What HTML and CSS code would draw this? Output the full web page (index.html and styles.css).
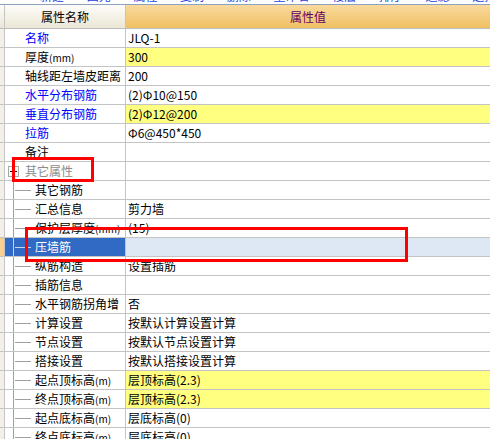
FILE: index.html
```html
<!DOCTYPE html>
<html lang="zh-CN">
<head>
<meta charset="utf-8">
<title>属性编辑</title>
<link rel="stylesheet" href="styles.css">
</head>
<body>
<div class="page">
  <div class="strip"><span class="frag">新建 图元 属性 复制 删除 重命名 楼层 排序 过滤 选择</span></div>
  <div class="table">
    <div class="row head"><div class="mg"></div><div class="nm">属性名称</div><div class="vl">属性值</div></div>
    <div class="row"><div class="mg"></div><div class="nm blue">名称</div><div class="vl">JLQ-1</div></div>
    <div class="row"><div class="mg"></div><div class="nm">厚度<span class="unit">(mm)</span></div><div class="vl yel">300</div></div>
    <div class="row"><div class="mg"></div><div class="nm">轴线距左墙皮距离</div><div class="vl">200</div></div>
    <div class="row"><div class="mg"></div><div class="nm blue">水平分布钢筋</div><div class="vl">(2)Φ10@150</div></div>
    <div class="row"><div class="mg"></div><div class="nm blue">垂直分布钢筋</div><div class="vl yel">(2)Φ12@200</div></div>
    <div class="row"><div class="mg"></div><div class="nm blue">拉筋</div><div class="vl">Φ6@450*450</div></div>
    <div class="row"><div class="mg"></div><div class="nm">备注</div><div class="vl"></div></div>
    <div class="row"><div class="mg"></div><div class="nm grp"><span class="box"></span><span class="gray">其它属性</span></div><div class="vl"></div></div>
    <div class="row"><div class="mg"></div><div class="nm ch">其它钢筋</div><div class="vl"></div></div>
    <div class="row"><div class="mg"></div><div class="nm ch">汇总信息</div><div class="vl">剪力墙</div></div>
    <div class="row"><div class="mg"></div><div class="nm ch">保护层厚度<span class="unit">(mm)</span></div><div class="vl">(15)</div></div>
    <div class="row sel"><div class="mg"></div><div class="nm ch">压墙筋</div><div class="vl"></div></div>
    <div class="row"><div class="mg"></div><div class="nm ch">纵筋构造</div><div class="vl">设置插筋</div></div>
    <div class="row"><div class="mg"></div><div class="nm ch">插筋信息</div><div class="vl"></div></div>
    <div class="row"><div class="mg"></div><div class="nm ch">水平钢筋拐角增</div><div class="vl">否</div></div>
    <div class="row"><div class="mg"></div><div class="nm ch">计算设置</div><div class="vl">按默认计算设置计算</div></div>
    <div class="row"><div class="mg"></div><div class="nm ch">节点设置</div><div class="vl">按默认节点设置计算</div></div>
    <div class="row"><div class="mg"></div><div class="nm ch">搭接设置</div><div class="vl">按默认搭接设置计算</div></div>
    <div class="row"><div class="mg"></div><div class="nm ch">起点顶标高<span class="unit">(m)</span></div><div class="vl yel">层顶标高(2.3)</div></div>
    <div class="row"><div class="mg"></div><div class="nm ch">终点顶标高<span class="unit">(m)</span></div><div class="vl yel">层顶标高(2.3)</div></div>
    <div class="row"><div class="mg"></div><div class="nm ch">起点底标高<span class="unit">(m)</span></div><div class="vl">层底标高(0)</div></div>
    <div class="row"><div class="mg"></div><div class="nm ch">终点底标高<span class="unit">(m)</span></div><div class="vl">层底标高(0)</div></div>
  </div>
  <div class="mark mark-group"></div>
  <div class="mark mark-row"></div>
</div>
</body>
</html>
```
FILE: styles.css
```css
html, body {
  margin: 0;
  background: #fff;
}
body {
  font-family: "Noto Sans CJK SC", "Noto Sans", sans-serif;
  font-size: 12px;
  color: #000;
}
*, *::before, *::after {
  box-sizing: border-box;
}
.page {
  position: relative;
  width: 490px;
  height: 439px;
  overflow: hidden;
}
.strip {
  height: 5px;
  border-bottom: 1px solid #8da2bd;
  overflow: hidden;
}
.frag {
  display: block;
  margin-top: -10px;
  padding-left: 40px;
  line-height: 12px;
  color: #1a3fe0;
  word-spacing: 20px;
  white-space: nowrap;
}
.row {
  display: grid;
  grid-template-columns: 5px 121px 1fr;
  height: 19px;
  border-bottom: 1px solid #c4c4c4;
}
.row > div {
  line-height: 18px;
  white-space: nowrap;
  overflow: hidden;
}
.mg {
  background: #f3f1e7;
  border-right: 1px solid #c4c4c4;
}
.nm {
  border-right: 1px solid #c4c4c4;
  padding-left: 20px;
}
.vl {
  padding-left: 2px;
}
.head {
  height: 24px;
  border-bottom-color: #bdbdbd;
}
.head > div {
  line-height: 23px;
}
.head .mg,
.head .nm {
  background: linear-gradient(#fdfcf9, #ebe7d6);
}
.head .nm {
  padding-left: 0;
  text-align: center;
}
.head .vl {
  background: linear-gradient(#f9d99c, #f0c164);
  color: #660066;
  text-align: center;
  padding-left: 0;
}
.blue { color: #0000ff; }
.gray { color: #8c8c8c; }
.yel { background: #ffff80; }
.unit {
  font-size: 10px;
}
.grp {
  display: flex;
  align-items: center;
  padding-left: 3px;
  background: linear-gradient(#a0a0a0, #a0a0a0) 8px 14px / 1px 5px no-repeat;
}
.box {
  width: 11px;
  height: 11px;
  margin-right: 6px;
  border: 1px solid #a8a8a8;
  background:
    linear-gradient(#000, #000) center / 7px 1px no-repeat,
    linear-gradient(#000, #000) center / 1px 7px no-repeat,
    #fbfbf8;
}
.ch {
  padding-left: 30px;
  background-image: linear-gradient(#a0a0a0, #a0a0a0), linear-gradient(#a0a0a0, #a0a0a0);
  background-size: 1px 100%, 16px 1px;
  background-position: 8px 0, 10px 9px;
  background-repeat: no-repeat;
}
.sel .mg {
  background: #f7d08f;
}
.sel .nm {
  background-color: #316ac5;
  background-image: linear-gradient(#c8d4ec, #c8d4ec), linear-gradient(#c8d4ec, #c8d4ec);
  color: #fff;
}
.sel .vl {
  background: #dee8f5;
}
.mark {
  position: absolute;
  border: 3px solid #ff0000;
}
.mark-group {
  left: 12px;
  top: 157px;
  width: 82px;
  height: 25px;
}
.mark-row {
  left: 25px;
  top: 227px;
  width: 383px;
  height: 35px;
}
```
